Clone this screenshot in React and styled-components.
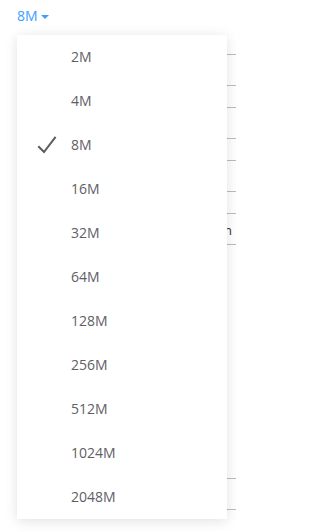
import styled, { createGlobalStyle } from "styled-components";
import { useState } from "react";

const sizes = ["2M", "4M", "8M", "16M", "32M", "64M", "128M", "256M", "512M", "1024M", "2048M"];

// rows of the table that sits behind the open menu
const bgRows = [
  { h: 31 },
  { h: 22 },
  { h: 31 },
  { h: 22 },
  { h: 31 },
  { h: 22 },
  { h: 31, text: "Open" },
  { h: 234 },
  { h: 31 },
  { h: 23 },
];

const CheckIcon = () => (
  <svg width="20" height="18" viewBox="0 0 20 18" fill="none">
    <polyline
      points="1.3,10.2 7,16 18.6,0.8"
      stroke="#5c5c5c"
      strokeWidth="2"
      strokeLinecap="butt"
      strokeLinejoin="miter"
    />
  </svg>
);

const App = () => {
  const [value, setValue] = useState("8M");

  return (
    <>
      <GlobalStyle />
      <Page>
        <Trigger>
          {value}
          <Caret />
        </Trigger>

        <BgTable>
          {bgRows.map((row, i) => (
            <BgRow key={i} $h={row.h}>
              {row.text && <BgCell>{row.text}</BgCell>}
            </BgRow>
          ))}
        </BgTable>

        <Menu>
          {sizes.map((s) => (
            <Item key={s} onClick={() => setValue(s)}>
              <IconSlot>{s === value && <CheckIcon />}</IconSlot>
              <Label>{s}</Label>
            </Item>
          ))}
        </Menu>
      </Page>
    </>
  );
};

export default App;

const GlobalStyle = createGlobalStyle`
  html, body {
    margin: 0;
    padding: 0;
    background: #fff;
  }
  body {
    font-family: "Open Sans", "Liberation Sans", sans-serif;
  }
`;

const Page = styled.div`
  position: relative;
  width: 236px;
  height: 532px;
  overflow: hidden;
  background: #fff;
`;

const Trigger = styled.div`
  display: flex;
  align-items: center;
  padding: 6px 0 0 17px;
  height: 20px;
  font-size: 14px;
  line-height: 20px;
  color: #409eff;
  cursor: pointer;
`;

const Caret = styled.span`
  width: 0;
  height: 0;
  margin: 1px 0 0 3px;
  border-left: 4px solid transparent;
  border-right: 4px solid transparent;
  border-top: 4px solid #409eff;
`;

const BgTable = styled.div`
  margin: 28px 0 0 120px;
  display: flex;
  flex-direction: column;
`;

const BgRow = styled.div`
  box-sizing: border-box;
  height: ${(p) => p.$h}px;
  border-top: 1px solid #bcbcbc;
  display: flex;
  align-items: center;
  justify-content: flex-end;
  padding-right: 4px;
`;

const BgCell = styled.span`
  font-size: 13px;
  color: #333;
  margin-top: 2px;
`;

const Menu = styled.ul`
  position: absolute;
  top: 35px;
  left: 17px;
  width: 210px;
  margin: 0;
  padding: 0;
  list-style: none;
  background: #fff;
  box-shadow: 0 2px 12px 0 rgba(0, 0, 0, 0.12);
`;

const Item = styled.li`
  display: flex;
  align-items: center;
  height: 44px;
  padding-left: 20px;
  font-size: 14px;
  line-height: 44px;
  color: #5f6064;
  cursor: pointer;

  &:hover {
    background: #f5f7fa;
  }
`;

const IconSlot = styled.span`
  display: flex;
  align-items: center;
  width: 34px;
  height: 18px;
`;

const Label = styled.span`
  white-space: nowrap;
`;
